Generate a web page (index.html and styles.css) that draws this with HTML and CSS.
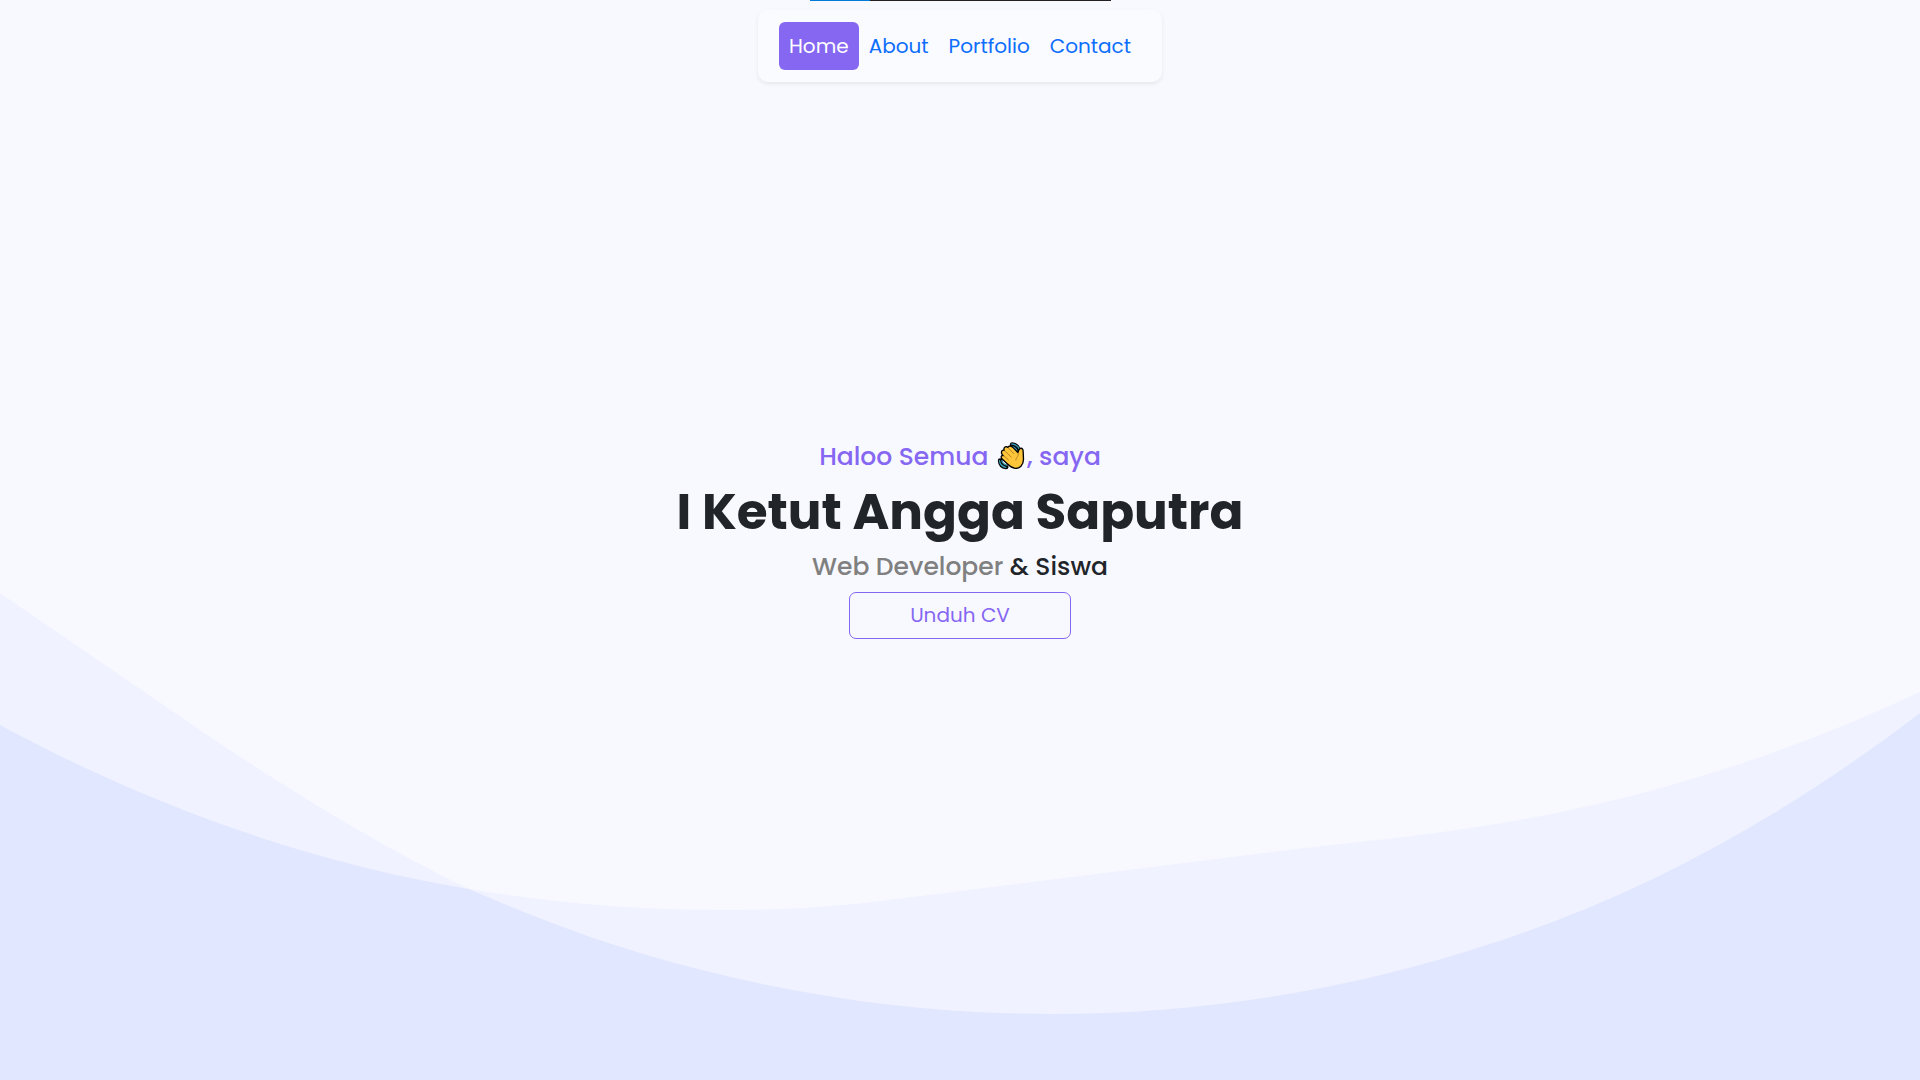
FILE: index.html
```html
<!DOCTYPE html>
<html lang="id">
<head>
<meta charset="utf-8">
<meta name="viewport" content="width=device-width, initial-scale=1">
<title>I Ketut Angga Saputra</title>
<link rel="stylesheet" href="styles.css">
</head>
<body>
<div class="page">
  <svg class="waves" viewBox="0 0 1920 1080" preserveAspectRatio="none" aria-hidden="true">
    <defs>
      <path id="wave-deep" d="M0 593L200 730C290 791 380 846 469 889C526 914 583 936 640 953C777 994 915 1014 1052 1014C1200 1014 1348 991 1496 942C1637 896 1779 821 1920 713V1080H0Z"/>
      <clipPath id="deep-clip"><use href="#wave-deep"/></clipPath>
      <path id="wave-flat" d="M0 725C156 809 313 863 469 889C552 903 635 910 718 910C772 910 827 908 881 901L1280 851C1352 842 1424 836 1496 824C1637 801 1779 758 1920 692V1080H0Z"/>
    </defs>
    <use class="wave-light" href="#wave-deep"/>
    <use class="wave-light" href="#wave-flat"/>
    <use class="wave-dark" href="#wave-flat" clip-path="url(#deep-clip)"/>
  </svg>

  <header class="top">
    <div class="progress"><div class="progress-fill"></div></div>
    <nav class="menu">
      <a class="menu-link active" href="#home">Home</a>
      <a class="menu-link" href="#about">About</a>
      <a class="menu-link" href="#portfolio">Portfolio</a>
      <a class="menu-link" href="#contact">Contact</a>
    </nav>
  </header>

  <main class="hero" id="home">
    <p class="greeting">Haloo Semua <svg class="wave-hand" viewBox="0 0 81 84" aria-hidden="true">
      <g fill="none" stroke="#000" stroke-width="14" stroke-linecap="round"><path d="M44 8Q59 9 64 23M8 56Q9 73 26 75"/></g>
      <g fill="none" stroke="#3c9bb4" stroke-width="4" stroke-linecap="round"><path d="M43 6Q59 7 66 22M42 13Q53 15 58 25M6 56Q8 73 25 76M13 56Q16 67 27 69"/></g>
      <path d="M14 37C9 30 14 23 20 25C17 17 24 11 31 16C35 10 42 11 47 17L61 32C63 24 65 20 69 19C75 18 77 23 77 29L78 52C78 70 66 80 53 79C43 78 37 73 30 66L14 51C9 45 11 39 17 41Z" fill="#fdc63a" stroke="#000" stroke-width="4" stroke-linejoin="round"/>
      <path d="M20 42L33 54M23 28L41 45M33 19L49 35M62 33C66 40 56 46 55 54" fill="none" stroke="#b88125" stroke-width="3" stroke-linecap="round"/>
    </svg>, saya</p>
    <h1 class="name">I Ketut Angga Saputra</h1>
    <p class="role"><span class="role-muted">Web Developer</span> &amp; Siswa</p>
    <button class="download" type="button">Unduh CV</button>
  </main>
</div>
</body>
</html>
```
FILE: styles.css
```css
* {
  box-sizing: border-box;
}

body {
  margin: 0;
  background: #f8f9ff;
  color: #212529;
  font-family: Poppins, Inter, "Open Sans", sans-serif;
}

/* The waves, the header and the hero share one grid cell. */
.page {
  display: grid;
  grid-template: minmax(100vh, auto) / minmax(0, 1fr);
}

.waves,
.top,
.hero {
  grid-area: 1 / 1;
}

.waves {
  width: 100%;
  height: 100%;
}

.wave-light {
  fill: #f0f2ff;
}

.wave-dark {
  fill: #e1e7ff;
}

.top {
  display: flex;
  flex-direction: column;
  align-items: center;
  align-self: start;
  gap: 9px;
  z-index: 1;
}

.progress {
  width: 301px;
  height: 1px;
  background: #231f20;
}

.progress-fill {
  width: 20%;
  height: 100%;
  background: #0078d7;
}

.menu {
  display: flex;
  padding: 12px 21px;
  border-radius: 10px;
  background: #fafbff;
  box-shadow: 0 2px 4px rgba(0, 0, 0, 0.075);
}

.menu-link {
  padding: 10px;
  border-radius: 6px;
  color: #0d6efd;
  font-size: 20px;
  line-height: 28px;
  text-decoration: none;
}

.menu-link.active {
  background: #8667f2;
  color: #fff;
}

.hero {
  display: flex;
  flex-direction: column;
  align-items: center;
  align-self: center;
  gap: 10px;
  text-align: center;
}

.greeting,
.role,
.name {
  margin: 0;
}

.greeting,
.role {
  font-size: 25px;
  font-weight: 500;
  line-height: 30px;
}

.greeting {
  color: #8667f2;
}

.wave-hand {
  width: 32px;
  height: 28px;
  padding: 0 2px;
  vertical-align: -5px;
}

.name {
  font-size: 50px;
  font-weight: 700;
  line-height: 60px;
}

.role-muted {
  color: #808080;
}

.download {
  width: 222px;
  padding: 8px 16px;
  border: 1px solid #8667f2;
  border-radius: 7px;
  background: transparent;
  color: #8667f2;
  font-family: inherit;
  font-size: 20px;
  line-height: 29px;
}
```
